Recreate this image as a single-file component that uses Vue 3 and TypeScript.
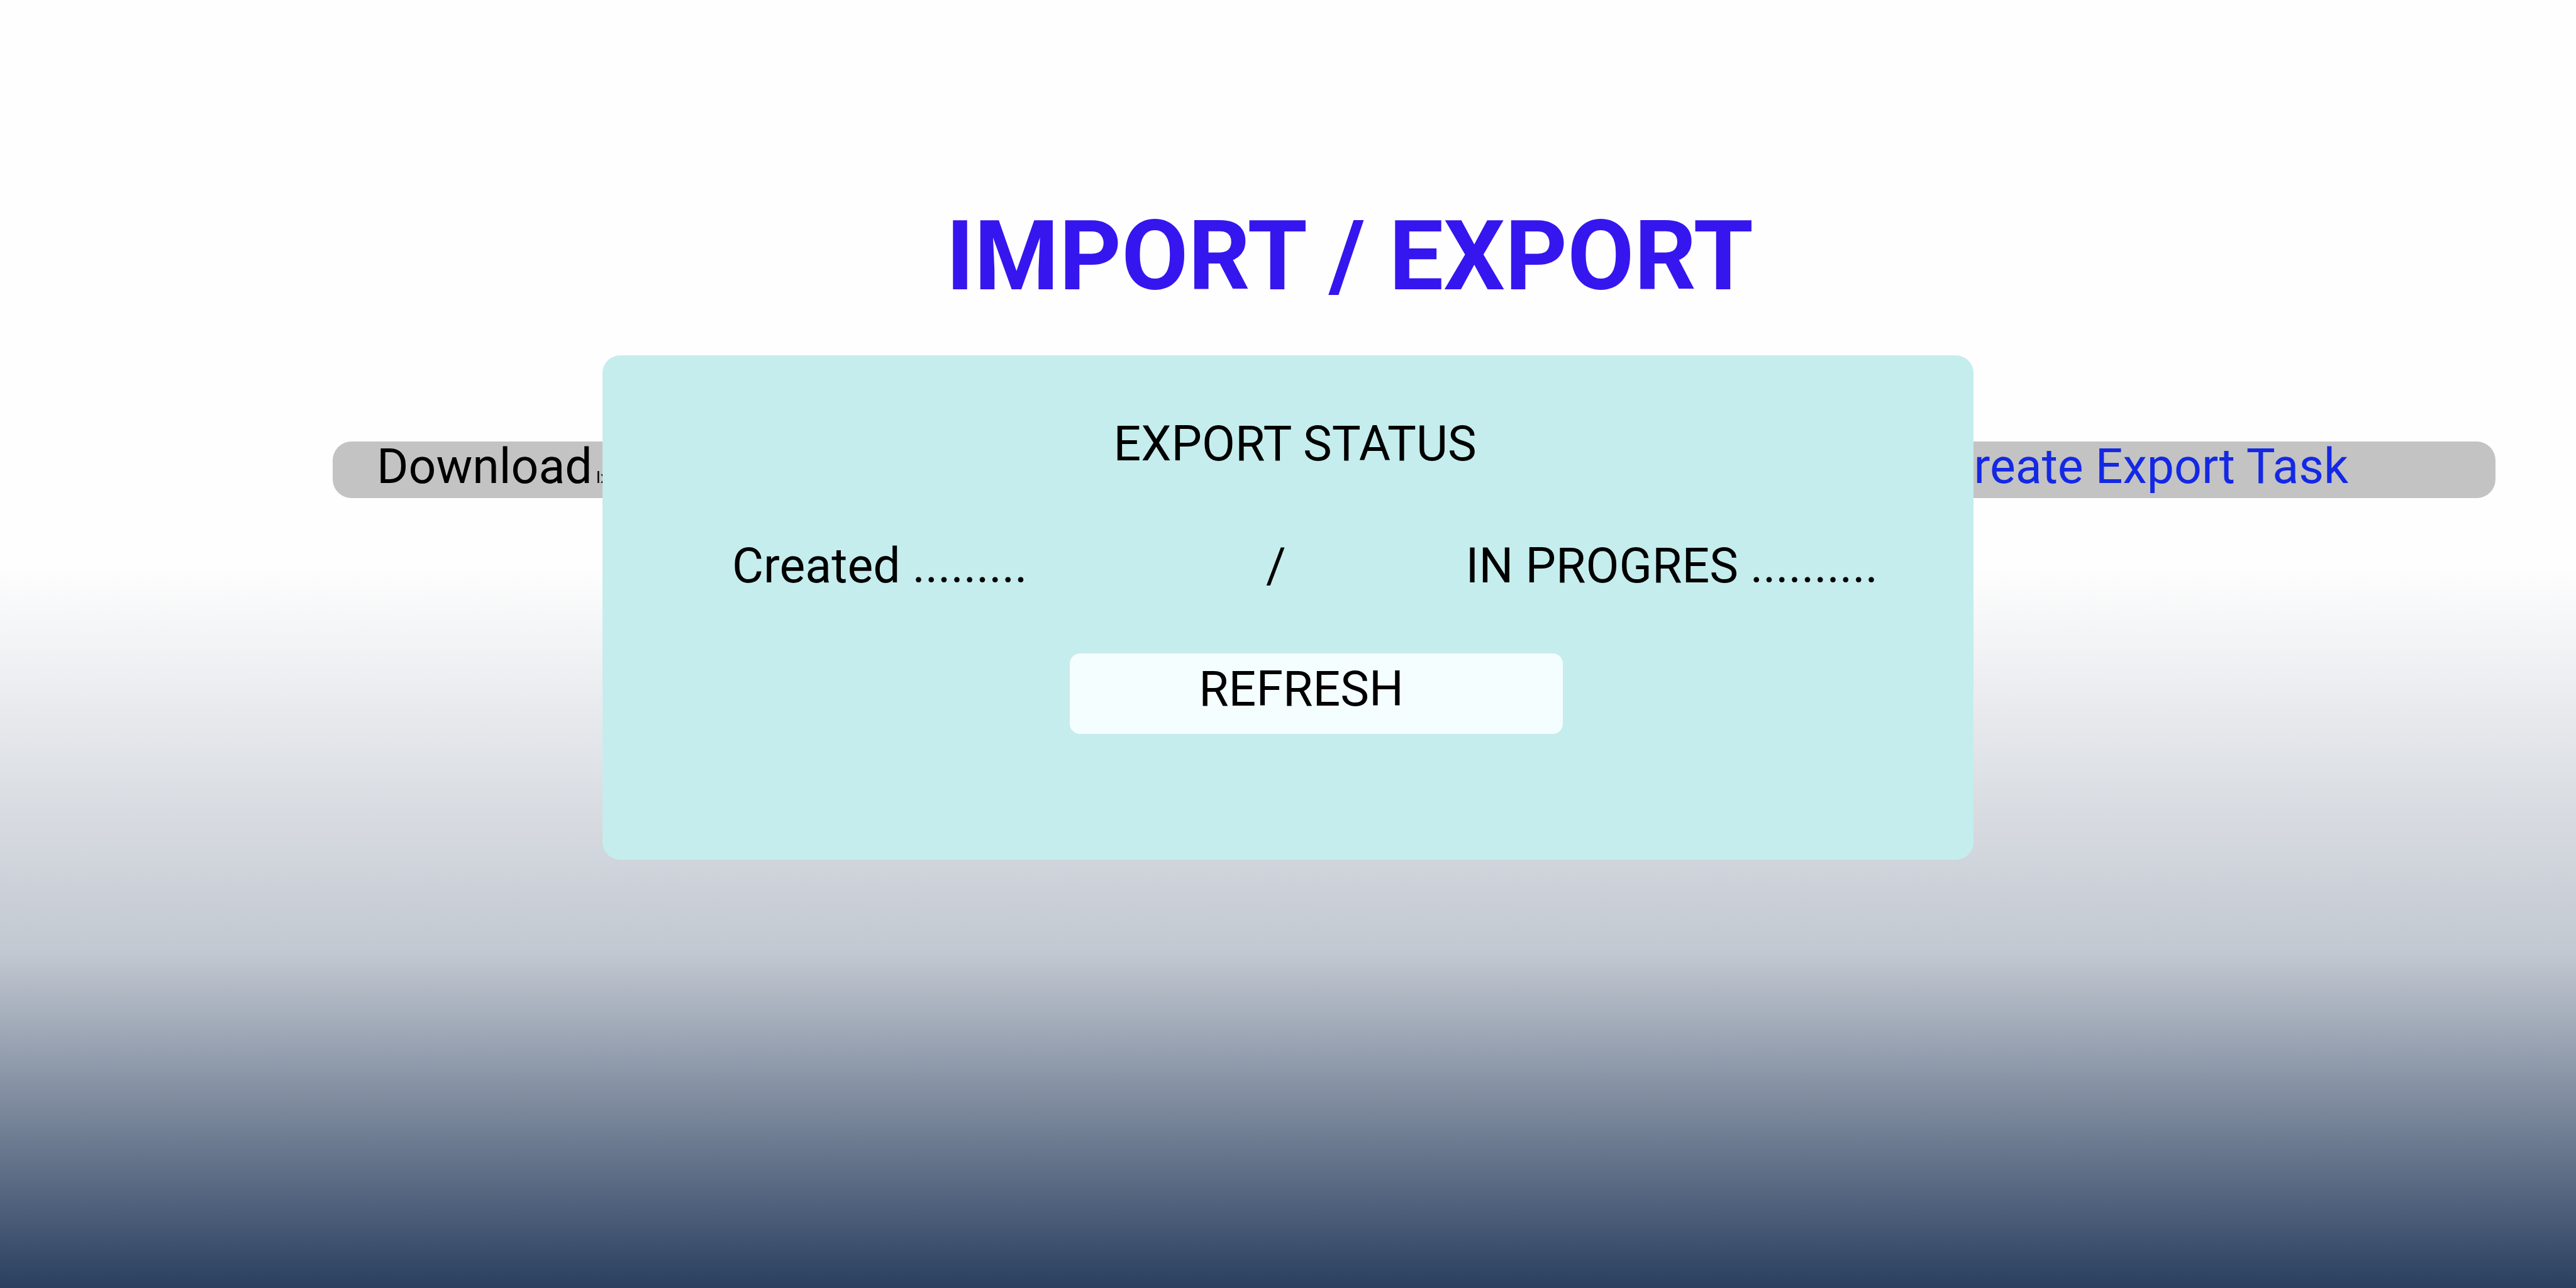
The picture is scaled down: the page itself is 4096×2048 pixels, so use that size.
<script setup lang="ts">
import { ref } from 'vue'

const createdCount = ref('.........')
const progressCount = ref('..........')

function refresh(): void {
  createdCount.value = '.........'
  progressCount.value = '..........'
}
</script>

<template>
  <main class="page">
    <h1 class="title">IMPORT / EXPORT</h1>
    <nav class="bar">
      <a class="download" href="#download">Download<small>Ix</small></a>
      <a class="create" href="#create">Create Export Task</a>
    </nav>
    <section class="dialog" role="dialog" aria-labelledby="status-title">
      <h2 id="status-title" class="status-title">EXPORT STATUS</h2>
      <div class="status-row">
        <span>Created {{ createdCount }}</span>
        <span class="slash">/</span>
        <span>IN PROGRES {{ progressCount }}</span>
      </div>
      <button class="refresh" type="button" @click="refresh">REFRESH</button>
    </section>
  </main>
</template>

<style>
body {
  margin: 0;
}
</style>

<style scoped>
.page {
  position: relative;
  box-sizing: border-box;
  min-height: 100vh;
  padding-top: 318px;
  font-family: Roboto, "Liberation Sans", sans-serif;
  font-size: 77px;
  line-height: 90px;
  color: #000;
  background: linear-gradient(#fefefe 44%, #c2c8d1 74%, #2a3f5f 100%);
}

.title {
  margin: 0;
  padding-left: 196px;
  font-size: 154px;
  font-weight: 700;
  line-height: 180px;
  text-align: center;
  color: #3516ee;
}

.bar {
  display: flex;
  justify-content: space-between;
  box-sizing: border-box;
  height: 90px;
  margin: 204px 128px 0 529px;
  padding: 0 234px 0 70px;
  border-radius: 30px;
  background: #c3c3c3;
  line-height: 80px;
  white-space: nowrap;
}

.download,
.create {
  text-decoration: none;
}

.download {
  color: #000;
}

.download small {
  margin-left: 6px;
  font-size: 26px;
}

.create {
  color: #1428e4;
}

.dialog {
  position: absolute;
  top: 565px;
  left: 958px;
  right: 958px;
  display: flex;
  flex-direction: column;
  box-sizing: border-box;
  padding: 96px 152px 200px 206px;
  border-radius: 28px;
  background: #c5eded;
  white-space: nowrap;
}

.status-title {
  margin: 0;
  padding-right: 32px;
  font-size: 77px;
  font-weight: 400;
  text-align: center;
}

.status-row {
  display: flex;
  justify-content: space-between;
  margin-top: 104px;
}

.slash {
  padding-left: 94px;
}

.refresh {
  align-self: center;
  width: 784px;
  height: 128px;
  margin: 94px 0 0 36px;
  padding: 0 48px 14px 0;
  border: 0;
  border-radius: 16px;
  background: #f5feff;
  font: inherit;
  color: #000;
  cursor: pointer;
}
</style>
